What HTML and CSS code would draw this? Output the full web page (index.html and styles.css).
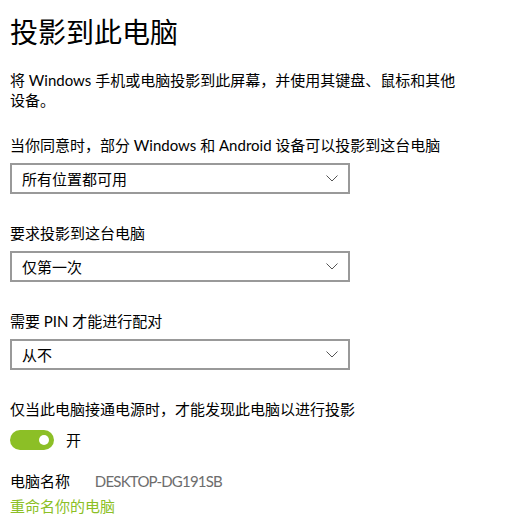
FILE: index.html
```html
<!DOCTYPE html>
<html lang="zh-CN">
<head>
    <meta charset="UTF-8">
    <title>投影到此电脑</title>
    <link rel="stylesheet" href="styles.css">
</head>
<body>
    <div class="page">
        <h1 class="title">投影到此电脑</h1>
        <p class="desc">将 Windows 手机或电脑投影到此屏幕，并使用其键盘、鼠标和其他设备。</p>

        <div class="setting">
            <div class="label">当你同意时，部分 Windows 和 Android 设备可以投影到这台电脑</div>
            <div class="select">
                <span>所有位置都可用</span>
                <svg class="chevron" width="12" height="7" viewBox="0 0 12 7"><path d="M0.5 0.5 L6 6 L11.5 0.5" fill="none" stroke="#555" stroke-width="1"/></svg>
            </div>
        </div>

        <div class="setting">
            <div class="label">要求投影到这台电脑</div>
            <div class="select">
                <span>仅第一次</span>
                <svg class="chevron" width="12" height="7" viewBox="0 0 12 7"><path d="M0.5 0.5 L6 6 L11.5 0.5" fill="none" stroke="#555" stroke-width="1"/></svg>
            </div>
        </div>

        <div class="setting">
            <div class="label">需要 PIN 才能进行配对</div>
            <div class="select">
                <span>从不</span>
                <svg class="chevron" width="12" height="7" viewBox="0 0 12 7"><path d="M0.5 0.5 L6 6 L11.5 0.5" fill="none" stroke="#555" stroke-width="1"/></svg>
            </div>
        </div>

        <div class="setting">
            <div class="label">仅当此电脑接通电源时，才能发现此电脑以进行投影</div>
            <div class="toggle-row">
                <span class="toggle"><span class="knob"></span></span>
                <span class="toggle-text">开</span>
            </div>
        </div>

        <div class="name-row">
            <span class="name-label">电脑名称</span>
            <span class="name-value">DESKTOP-DG191SB</span>
        </div>
        <a class="rename" href="#">重命名你的电脑</a>
    </div>
</body>
</html>
```

FILE: styles.css
```css
body {
    margin: 0;
    background: #fff;
    color: #000;
    font-family: "Lato", "Noto Sans CJK SC", sans-serif;
    font-size: 15px;
}
.page {
    padding: 0 10px;
}
.title {
    margin: 0;
    padding-top: 12px;
    font-size: 28px;
    font-weight: normal;
    line-height: 40px;
}
.desc {
    width: 455px;
    margin: 18px 0 0;
    line-height: 20px;
}
.setting {
    margin-top: 25px;
}
.setting + .setting {
    margin-top: 29px;
}
.label {
    line-height: 20px;
}
.select {
    box-sizing: content-box;
    width: 316px;
    height: 27px;
    margin-top: 8px;
    padding: 0 10px;
    border: 2px solid #999;
    display: flex;
    align-items: center;
    justify-content: space-between;
}
.toggle-row {
    display: flex;
    align-items: center;
    margin-top: 10px;
}
.toggle {
    width: 44px;
    height: 20px;
    border-radius: 10px;
    background: #8cbf26;
    position: relative;
}
.knob {
    position: absolute;
    width: 10px;
    height: 10px;
    border-radius: 50%;
    background: #fff;
    top: 5px;
    right: 5px;
}
.toggle-text {
    margin-left: 12px;
}
.name-row {
    margin-top: 21px;
    line-height: 20px;
}
.name-value {
    margin-left: 21px;
    color: #6d6d6d;
    letter-spacing: -0.8px;
}
.rename {
    display: block;
    margin-top: 5px;
    line-height: 20px;
    color: #8cbf26;
    text-decoration: none;
}
```
